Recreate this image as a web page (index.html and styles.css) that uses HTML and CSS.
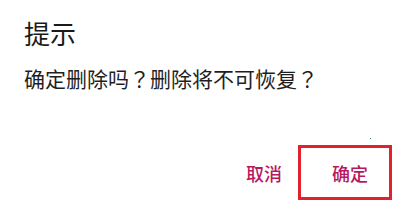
FILE: index.html
```html
<!DOCTYPE html>
<html lang="zh-CN">
<head>
<meta charset="utf-8">
<link rel="stylesheet" href="styles.css">
</head>
<body>
<div class="dialog">
  <div class="title">提示</div>
  <div class="message">确定删除吗<span class="punct">？</span>删除将不可恢复<span class="punct">？</span></div>
  <div class="actions">
    <span class="btn btn-cancel">取消</span>
    <span class="btn btn-ok">确定</span>
  </div>
  <span class="speck"></span>
</div>
</body>
</html>
```
FILE: styles.css
```css
html, body {
  margin: 0;
  padding: 0;
  background: #ffffff;
}
body {
  width: 400px;
  height: 211px;
  overflow: hidden;
  font-family: "Noto Sans CJK SC", "Noto Sans", sans-serif;
}
.dialog {
  position: relative;
  padding: 20px 8px 0 24px;
}
.title {
  font-size: 26px;
  line-height: 26px;
  color: #1a1a1a;
}
.message {
  margin-top: 21px;
  font-size: 21px;
  line-height: 22px;
  color: #1f1f1f;
  white-space: pre;
  text-spacing-trim: space-all;
}
.punct {
  display: inline-block;
  box-sizing: border-box;
  width: 1em;
  padding-right: 5px;
  text-align: center;
  font-family: "Noto Sans CJK TC", "Noto Sans CJK SC", sans-serif;
}
.actions {
  display: flex;
  justify-content: flex-end;
  align-items: center;
  margin-top: 56px;
}
.btn {
  font-size: 18px;
  line-height: 20px;
  font-weight: 500;
  color: #b8195d;
}
.btn-cancel {
  margin-right: 16px;
}
.btn-ok {
  box-sizing: border-box;
  width: 94px;
  height: 55px;
  border: 3px solid #e1212b;
  display: flex;
  align-items: center;
  padding-left: 31px;
}
.speck {
  position: absolute;
  left: 370px;
  top: 138px;
  width: 1px;
  height: 1px;
  background: #2a9d8f;
}
```
